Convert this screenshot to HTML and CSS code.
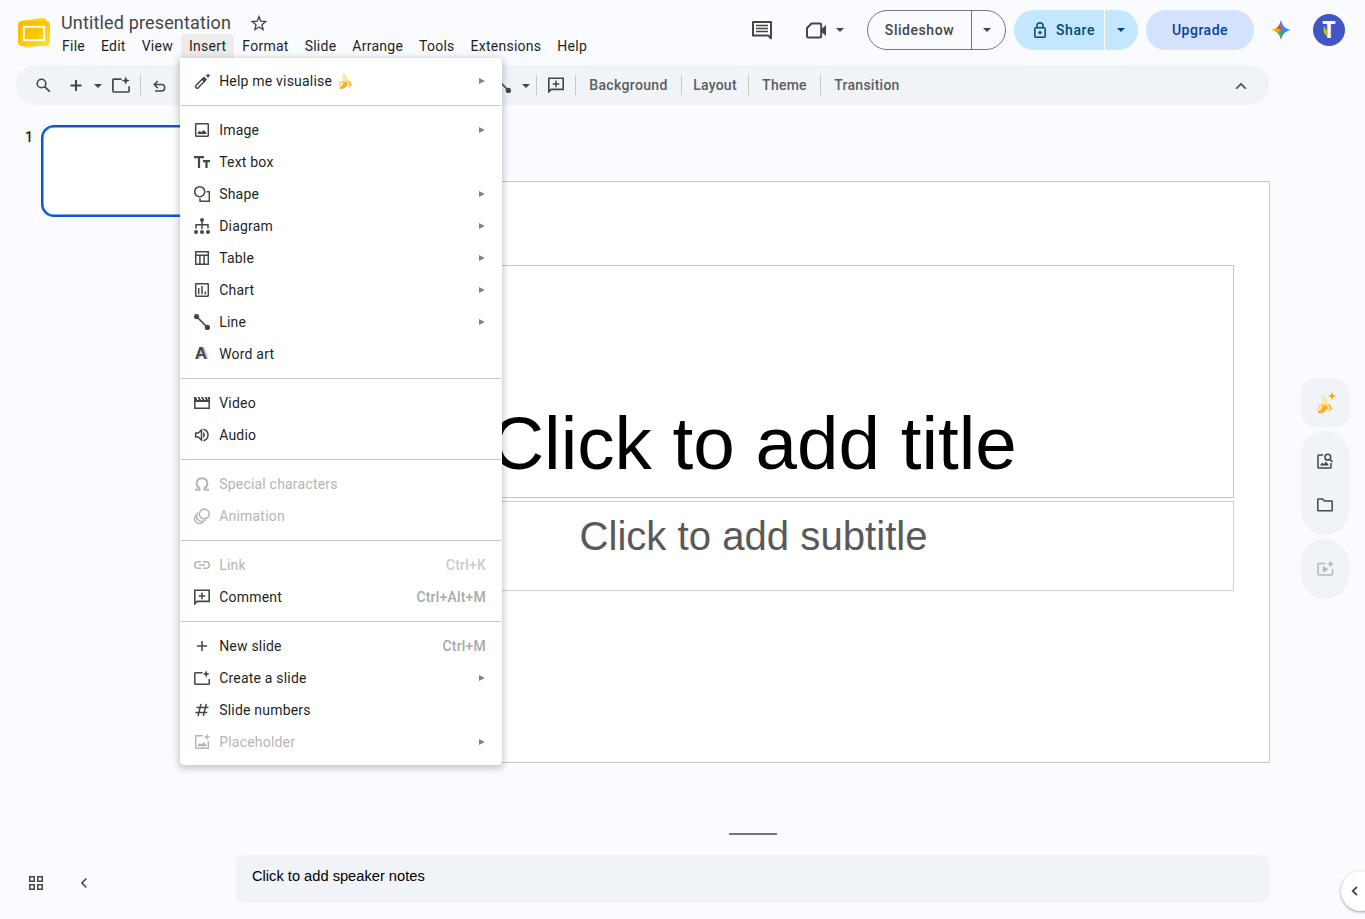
FILE: index.html
```
<!DOCTYPE html>
<html lang="en">
<head>
  <meta charset="UTF-8">
  <meta name="viewport" content="width=device-width, initial-scale=1.0">
  <title>Untitled presentation</title>
  <link rel="stylesheet" href="styles.css">
</head>
<body>

  <!-- Shared icons -->
  <svg class="sprite">
    <symbol id="i-newslide" viewBox="0 0 16 16"><path d="M8.5 2.800H1.600Q.8 2.800.8 3.600v9.800q0 .8.8.8h12.800q.8 0 .8-.8V9" fill="none" stroke="currentColor" stroke-width="1.5"/><path d="M12.200.3l1 2.700 2.700 1-2.700 1-1 2.700-1-2.700-2.700-1 2.700-1z" fill="currentColor"/></symbol>
    <symbol id="i-comment" viewBox="0 0 16 16"><path d="M.8 14.800V1.200h14.400v11.200H3.200z" fill="none" stroke="currentColor" stroke-width="1.600"/><path d="M8 3.600v6.600M4.700 6.900h6.600" stroke="currentColor" stroke-width="1.500"/></symbol>
    <symbol id="i-line" viewBox="0 0 16 16"><path d="M2.500 2.500l11 11" stroke="currentColor" stroke-width="1.700"/><circle cx="2.600" cy="2.600" r="2.600" fill="currentColor"/><circle cx="13.400" cy="13.400" r="2.600" fill="currentColor"/></symbol>
  </svg>

  <header class="header">
    <svg class="logo" viewBox="0 0 32 32">
      <defs><linearGradient id="lg" x1="0" y1="0" x2="1" y2="1"><stop offset="0" stop-color="#ffb900"/><stop offset=".55" stop-color="#ffc700"/><stop offset="1" stop-color="#ffe633"/></linearGradient></defs>
      <path d="M2 4l22-3q3-.3 4 2l1 5-22 4z" fill="#ffd500"/>
      <path d="M2 25l4 5q1 1 3 .8L28 28l1-3z" fill="#ffdb4d"/>
      <rect x="0" y="4" width="32" height="25" rx="4" fill="url(#lg)"/>
      <rect x="5.800" y="9.800" width="20.400" height="13.400" fill="none" stroke="#fff" stroke-width="1.900"/>
    </svg>
    <div class="doc">
      <div class="doc-title">
        <span>Untitled presentation</span>
        <svg width="16" height="16" viewBox="0 0 16 16"><path d="M8 1.700l1.800 4.500 4.900.4-3.700 3.200 1.100 4.700L8 12l-4.100 2.500L5 9.800 1.300 6.600l4.900-.4z" fill="none" stroke="currentColor" stroke-width="1.400"/></svg>
      </div>
      <nav class="menubar">
        <a>File</a><a>Edit</a><a>View</a><a class="active">Insert</a><a>Format</a><a>Slide</a><a>Arrange</a><a>Tools</a><a>Extensions</a><a>Help</a>
      </nav>
    </div>
    <div class="actions">
      <svg class="comments" width="20" height="21" viewBox="0 0 20 21"><path d="M1 1.900h18v16.300L16.200 15.500H1z" fill="none" stroke="currentColor" stroke-width="2" stroke-linejoin="round"/><path d="M4 5.500h12M4 8.500h12M4 11.500h12" stroke="currentColor" stroke-width="1.600"/></svg>
      <svg class="camera" width="20" height="17" viewBox="0 0 20 17"><path d="M5.500 1.500H14q1.200 0 1.200 1.200v11.600q0 1.200-1.200 1.200H2.200Q1 15.500 1 14.300V6z" fill="none" stroke="currentColor" stroke-width="2"/><path d="M15.500 7L20 3v11l-4.500-4z" fill="currentColor"/></svg>
      <i class="caret"></i>
      <div class="split slideshow"><span>Slideshow</span><b><i class="caret"></i></b></div>
      <div class="split share">
        <span><svg width="12" height="16" viewBox="0 0 12 16"><rect x=".8" y="5.800" width="10.400" height="9.400" rx="1" fill="none" stroke="currentColor" stroke-width="1.500"/><path d="M3 5.500V3.800a3 3 0 0 1 6 0v1.700" fill="none" stroke="currentColor" stroke-width="1.500"/><circle cx="6" cy="10.500" r="1.600" fill="currentColor"/></svg>Share</span><b><i class="caret"></i></b>
      </div>
      <div class="upgrade">Upgrade</div>
      <div class="gemini"></div>
      <div class="avatar">T<svg width="6" height="12" viewBox="0 0 6 12"><path d="M1.500 1v5l2 3M4 4v5M1 3l3 3" fill="none" stroke="#c6d300" stroke-width="1.600"/></svg></div>
    </div>
  </header>

  <div class="toolbar">
    <svg class="t-search" width="15" height="15" viewBox="0 0 15 15"><circle cx="5.500" cy="5.500" r="4.300" fill="none" stroke="currentColor" stroke-width="1.600"/><path d="M8.700 8.700l5 5" stroke="currentColor" stroke-width="1.800"/></svg>
    <svg class="t-plus" width="11" height="11" viewBox="0 0 11 11"><path d="M6 0v11M.5 5.500h11" stroke="currentColor" stroke-width="2"/></svg>
    <i class="caret t-caret"></i>
    <svg class="t-new" width="18" height="18"><use href="#i-newslide"/></svg>
    <hr>
    <svg class="t-undo" width="13" height="12" viewBox="0 0 13 12"><path d="M2 11h6.500a3.200 3.200 0 0 0 0-6.400H1.500M4.800 1L1.300 4.600l3.500 3.500" fill="none" stroke="currentColor" stroke-width="1.500"/></svg>
    <svg class="t-line" width="16" height="16"><use href="#i-line"/></svg>
    <i class="caret t-caret2"></i>
    <hr>
    <svg class="t-comment" width="16" height="16"><use href="#i-comment"/></svg>
    <hr>
    <span class="w-bg">Background</span><hr>
    <span class="w-layout">Layout</span><hr>
    <span class="w-theme">Theme</span><hr>
    <span class="w-trans">Transition</span>
    <svg class="t-up" width="12" height="8" viewBox="0 0 12 8"><path d="M1.200 6.800L6 2l4.800 4.800" fill="none" stroke="currentColor" stroke-width="1.600"/></svg>
  </div>

  <main class="workspace">
    <aside class="filmstrip">
      <div class="film"><span>1</span><div class="thumb"></div></div>
      <div class="film-tools">
        <svg width="14" height="14" viewBox="0 0 14 14"><path d="M.75.75h4.500v4.500H.75zM8.750.75h4.500v4.500h-4.500zM.75 8.750h4.500v4.500H.75zM8.750 8.750h4.500v4.500h-4.500z" fill="none" stroke="currentColor" stroke-width="1.500"/></svg>
        <svg width="7" height="10" viewBox="0 0 7 10"><path d="M5.300.5L1 5l4.300 4.500" fill="none" stroke="currentColor" stroke-width="1.600"/></svg>
      </div>
    </aside>

    <section class="stage">
      <div class="slide">
        <div class="slide-title">Click to add title</div>
        <div class="slide-sub">Click to add subtitle</div>
      </div>
      <div class="handle"></div>
      <div class="notes">Click to add speaker notes</div>
    </section>

    <aside class="rail">
      <div class="pill first">
        <em>🍌</em>
        <svg width="8" height="8" viewBox="0 0 8 8"><path d="M4 0l1.200 2.800L8 4 5.200 5.200 4 8 2.800 5.200 0 4l2.800-1.200z" fill="#f9ab00"/></svg>
      </div>
      <div class="pill second">
        <svg width="16" height="16" viewBox="0 0 16 16"><path d="M6 2H1.700q-.7 0-.7.700v11.500q0 .8.700.8h11.500q.8 0 .8-.8V10" fill="none" stroke="currentColor" stroke-width="1.500"/><path d="M3 12.500l2.200-3 1.600 1.800 2.200-2.800 3 4z" fill="currentColor"/><circle cx="10.800" cy="4.200" r="2.900" fill="none" stroke="currentColor" stroke-width="1.500"/><path d="M12.800 6.200l2.800 2.700" stroke="currentColor" stroke-width="1.500"/></svg>
        <svg width="16" height="14" viewBox="0 0 16 14"><path d="M.8 1.500Q.8 1 1.300 1h4.200l2 2h7.200q.5 0 .5.500v8.700q0 .6-.5.600H1.300q-.5 0-.5-.6z" fill="none" stroke="currentColor" stroke-width="1.500"/></svg>
      </div>
      <div class="pill third">
        <svg width="17" height="17" viewBox="0 0 17 17"><path d="M8.500 3.500H2q-1 0-1 1V14q0 1 1 1h12.500q1 0 1-1V9" fill="none" stroke="currentColor" stroke-width="1.500"/><path d="M6 6l5.500 3.300L6 12.500zM13.500.5l1 2.500 2.500 1-2.500 1-1 2.500-1-2.500-2.500-1 2.500-1z" fill="currentColor"/></svg>
      </div>
      <div class="expand"><svg width="7" height="10" viewBox="0 0 7 10"><path d="M6 .8L1.700 5 6 9.200" fill="none" stroke="currentColor" stroke-width="1.800"/></svg></div>
    </aside>
  </main>

  <!-- Insert menu -->
  <div class="dropdown">
    <div class="item"><svg viewBox="0 0 16 16"><path d="M2 12.600l6.800-7 2.200 2.200-6.800 7q-1.200 1-2.200 0t0-2.200z" fill="none" stroke="currentColor" stroke-width="1.500" stroke-linejoin="round"/><path d="M7.300 6.300L10.200 3.600l2.800 2.900-2.800 2.800zM14-.3l.8 2.200 2.200.8-2.200.8-.8 2.200-.8-2.200-2.200-.8 2.200-.8z" fill="currentColor"/></svg><span>Help me visualise <em>🍌</em></span><i class="sub"></i></div>
    <hr>
    <div class="item"><svg viewBox="0 0 16 16"><rect x="1.700" y="1.700" width="12.600" height="12.600" rx=".7" fill="none" stroke="currentColor" stroke-width="1.500"/><path d="M3.800 12V10.500l2-1.700 1.500 1.500L9.800 8l2.600 2.500V12z" fill="currentColor"/></svg><span>Image</span><i class="sub"></i></div>
    <div class="item"><svg viewBox="0 0 16 16"><path d="M0 3.200h10M5 3.200v10.800M9 7.200h7M12.500 7.200v6.800" stroke="currentColor" stroke-width="2.200"/></svg><span>Text box</span></div>
    <div class="item"><svg viewBox="0 0 16 16"><circle cx="5.700" cy="5.700" r="5" fill="none" stroke="currentColor" stroke-width="1.600"/><path d="M12.500 5.800h2.800v9.500H6v-3" fill="none" stroke="currentColor" stroke-width="1.500"/></svg><span>Shape</span><i class="sub"></i></div>
    <div class="item"><svg viewBox="0 0 16 16"><path d="M8 2v9M2 10.500V6.700h12v3.800" fill="none" stroke="currentColor" stroke-width="1.500"/><circle cx="8" cy="2" r="2" fill="currentColor"/><circle cx="2" cy="14" r="2" fill="currentColor"/><circle cx="8" cy="14" r="2" fill="currentColor"/><circle cx="14" cy="14" r="2" fill="currentColor"/></svg><span>Diagram</span><i class="sub"></i></div>
    <div class="item"><svg viewBox="0 0 16 16"><path d="M1.700 1.700h12.600v12.600H1.700zM1.700 5.300h12.600M5.900 5.300v9M10.100 5.300v9" fill="none" stroke="currentColor" stroke-width="1.500"/></svg><span>Table</span><i class="sub"></i></div>
    <div class="item"><svg viewBox="0 0 16 16"><rect x="1.700" y="1.700" width="12.600" height="12.600" rx=".7" fill="none" stroke="currentColor" stroke-width="1.500"/><path d="M4.700 6v6.200M8 4v8.200M11.300 9.500v2.700" stroke="currentColor" stroke-width="1.500"/></svg><span>Chart</span><i class="sub"></i></div>
    <div class="item"><svg><use href="#i-line"/></svg><span>Line</span><i class="sub"></i></div>
    <div class="item"><b class="wordart">A</b><span>Word art</span></div>
    <hr>
    <div class="item"><svg viewBox="0 0 16 16"><path d="M.8 6v7.200h14.400V6z" fill="none" stroke="currentColor" stroke-width="1.500"/><path d="M0 2h2l1.500 3H5L3.500 2h2L7 5h1.500L7 2h2l1.500 3H12l-1.500-3h2L14 5h.5L13.500 2H16v5H0z" fill="currentColor"/></svg><span>Video</span></div>
    <div class="item"><svg viewBox="0 0 16 16"><path d="M1.700 6h2.600L7.500 3v10L4.300 10H1.700z" fill="none" stroke="currentColor" stroke-width="1.500"/><path d="M9.200 4.800q3.600 3.200 0 6.400z" fill="currentColor"/><path d="M9.500 2.200c6 2 6 9.600 0 11.600" fill="none" stroke="currentColor" stroke-width="1.500"/></svg><span>Audio</span></div>
    <hr>
    <div class="item off"><svg viewBox="0 0 16 16"><path d="M1 13.700h4.500v-1.500c-4.500-3-3.500-9.900 2.500-9.900s7 6.900 2.500 9.900v1.500H15" fill="none" stroke="currentColor" stroke-width="2"/></svg><span>Special characters</span></div>
    <div class="item off"><svg viewBox="0 0 16 16"><circle cx="10.300" cy="5.900" r="4.900" fill="none" stroke="currentColor" stroke-width="1.500"/><path d="M4 4.600a4.900 4.900 0 0 0 7.500 7.200M1.900 7.200a4.900 4.900 0 0 0 7.300 6.700" fill="none" stroke="currentColor" stroke-width="1.500"/></svg><span>Animation</span></div>
    <hr>
    <div class="item off"><svg viewBox="0 0 16 16"><path d="M7 4.700H4a3.300 3.300 0 0 0 0 6.600h3M9 4.700h3a3.300 3.300 0 0 1 0 6.600H9M5 8h6" fill="none" stroke="currentColor" stroke-width="1.500"/></svg><span>Link</span><kbd>Ctrl+K</kbd></div>
    <div class="item"><svg><use href="#i-comment"/></svg><span>Comment</span><kbd>Ctrl+Alt+M</kbd></div>
    <hr>
    <div class="item"><svg viewBox="0 0 16 16"><path d="M8 3v10M3 8h10" stroke="currentColor" stroke-width="1.500"/></svg><span>New slide</span><kbd>Ctrl+M</kbd></div>
    <div class="item"><svg><use href="#i-newslide"/></svg><span>Create a slide</span><i class="sub"></i></div>
    <div class="item"><svg viewBox="0 0 16 16"><path d="M7 2L4 14M12.300 2l-3 12M2.500 5.500h12M1.300 10.500h12" stroke="currentColor" stroke-width="1.500"/></svg><span>Slide numbers</span></div>
    <div class="item off"><svg viewBox="0 0 16 16"><path d="M9 1.700H1.700v12.600h12.600V7" fill="none" stroke="currentColor" stroke-width="1.500"/><path d="M3.800 12.200V10.700l2-1.700 1.500 1.500 2.500-2.300 2.600 2.500v1.500z" fill="currentColor"/><path d="M13 .5v5M10.500 3h5" stroke="currentColor" stroke-width="1.400"/></svg><span>Placeholder</span><i class="sub"></i></div>
  </div>

</body>
</html>
```
FILE: styles.css
```
* {
  margin: 0;
  padding: 0;
  box-sizing: border-box;
}

body {
  position: relative;
  width: 1365px;
  height: 919px;
  overflow: hidden;
  background: #f9fbff;
  color: #444746;
  font-family: Roboto, sans-serif;
  font-size: 14px;
}

svg {
  display: block;
  flex: none;
  overflow: visible;
}

em {
  font-style: normal;
}

.sprite {
  position: absolute;
  width: 0;
  height: 0;
}

.caret {
  flex: none;
  border: 4px solid transparent;
  border-top-color: currentColor;
  border-bottom: 0;
}

/* Header */
.header {
  display: flex;
  height: 65px;
}

.logo {
  width: 32px;
  height: 32px;
  margin: 17px 4px 0 18px;
}

.doc-title {
  display: flex;
  align-items: center;
  gap: 20px;
  height: 22px;
  margin: 12px 0 0 7px;
  font-size: 18px;
  letter-spacing: 0.15px;
}

.doc-title span {
  margin-top: -2px;
}

.menubar {
  display: flex;
}

.menubar a {
  height: 24px;
  padding: 0 8px;
  border-radius: 4px 4px 0 0;
  color: #1f1f1f;
  line-height: 24px;
  letter-spacing: 0.25px;
}

.menubar .active {
  background: #ececed;
}

.actions {
  display: flex;
  align-items: center;
  height: 60px;
  margin-left: auto;
  padding-right: 20px;
  font-weight: 500;
}

.comments {
  margin-right: 34px;
}

.camera {
  margin-right: 10px;
}

.split {
  display: flex;
  height: 40px;
  border-radius: 20px;
  line-height: 40px;
}

.split span {
  display: flex;
  align-items: center;
  justify-content: center;
}

.split b {
  display: flex;
  align-items: center;
  justify-content: center;
}

.slideshow {
  width: 139px;
  margin-left: 23px;
  border: 1px solid #747775;
  line-height: 38px;
  letter-spacing: 0.55px;
}

.slideshow span {
  width: 103px;
}

.slideshow b {
  flex: 1;
  padding-right: 3px;
  border-left: 1px solid #747775;
}

.share {
  width: 124px;
  margin-left: 8px;
  background: #c2e7ff;
  color: #004a77;
}

.share span {
  gap: 10px;
  width: 90px;
  padding-left: 11px;
  letter-spacing: 0.6px;
}

.share b {
  flex: 1;
  padding-right: 2px;
  border-left: 1px solid #fff;
}

.upgrade {
  width: 108px;
  height: 40px;
  margin-left: 8px;
  border-radius: 20px;
  background: #d3e3fd;
  color: #0842a0;
  line-height: 40px;
  letter-spacing: 0.5px;
  text-align: center;
}

.gemini {
  width: 20px;
  height: 20px;
  margin: 0 22px 0 17px;
  background: conic-gradient(#4285f4 0 38%, #34a853 50%, #8ab13c 64%, #fbbc04 75%, #ea4335 88%, #ea4335 96%, #4285f4);
  clip-path: path('M10 0 C11.500 6 14 8.500 20 10 C14 11.500 11.500 14 10 20 C8.500 14 6 11.500 0 10 C6 8.500 8.500 6 10 0Z');
}

.avatar {
  position: relative;
  width: 32px;
  height: 32px;
  border-radius: 50%;
  background: #4355c4;
  color: #fff;
  font: bold 23px/31px "Open Sans", sans-serif;
  text-align: center;
}

.avatar svg {
  position: absolute;
  left: 10px;
  top: 12px;
}

/* Toolbar */
.toolbar {
  display: flex;
  align-items: center;
  width: 1253px;
  height: 40px;
  margin-left: 16px;
  border-radius: 20px;
  background: #f0f3f8;
}

.toolbar hr {
  width: 1px;
  height: 20px;
  border: 0;
  background: #c7c7c7;
}

.toolbar span {
  color: #5b5e61;
  font-weight: 500;
  text-align: center;
  letter-spacing: 0.25px;
}

.t-search { margin-left: 20px; }
.t-plus { margin-left: 19px; }
.t-caret { margin: 2px 10px 0 13px; }
.t-new { margin-right: 10px; }
.t-undo { margin: 2px 0 0 12px; }
.t-line { margin-left: 329px; }
.t-caret2 { margin: 1px 6px 0 11px; }
.t-comment { margin: 0 11px; }
.w-bg { width: 105px; }
.w-layout { width: 66px; }
.w-theme { width: 71px; }
.w-trans { width: 92px; }

.toolbar .w-bg {
  letter-spacing: 0.35px;
}

.t-up {
  margin: 1px 22px 0 auto;
}

/* Workspace */
.workspace {
  display: grid;
  grid-template-columns: 236px 1034px 95px;
  height: 814px;
}

.filmstrip {
  display: flex;
  flex-direction: column;
  justify-content: space-between;
}

.film {
  display: flex;
  padding: 20px 0 0 25px;
}

.film span {
  width: 16px;
  padding-top: 4px;
  color: #1f1f1f;
  font-weight: 500;
}

.thumb {
  width: 164px;
  height: 92px;
  border: 2.500px solid #0b57d0;
  border-radius: 13px;
  background: #fff;
  box-shadow: inset 0 0 0 0.500px #0b57d0;
}

.film-tools {
  display: flex;
  align-items: center;
  gap: 38px;
  padding: 0 0 29px 29px;
}

.stage {
  padding-top: 76px;
}

.slide {
  height: 582px;
  padding: 83px 35px 0;
  border: 1px solid #c4c7c5;
  background: #fff;
  font-family: "Liberation Sans", Arial, sans-serif;
  text-align: center;
}

.slide-title {
  height: 233px;
  padding: 134px 0 0 1px;
  border: 1px solid #c4c4c4;
  color: #000;
  font-size: 74.600px;
  line-height: 86px;
}

.slide-sub {
  height: 90px;
  margin-top: 3px;
  padding: 12px 0 0 1px;
  border: 1px solid #d0d0d0;
  color: #595959;
  font-size: 40.150px;
  line-height: 46px;
}

.handle {
  width: 48px;
  height: 2px;
  margin: 70px 0 20px 493px;
  background: #747775;
}

.notes {
  width: 1033px;
  height: 48px;
  padding: 12px 16px;
  border-radius: 8px;
  background: #f0f3f8;
  color: #000;
  font: 14.670px/18px "Liberation Sans", Arial, sans-serif;
}

.rail {
  display: flex;
  flex-direction: column;
  padding: 274px 0 8px 31px;
}

.pill {
  display: flex;
  flex-direction: column;
  align-items: center;
  justify-content: center;
  width: 48px;
  margin-bottom: 4px;
  padding-bottom: 2px;
  border-radius: 24px;
  background: #f0f3f8;
}

.first {
  position: relative;
  height: 48px;
  padding: 2px 3px 0 0;
  border-radius: 14px;
  font-size: 16px;
}

.first svg {
  position: absolute;
  left: 27px;
  top: 13px;
}

.second {
  gap: 29px;
  height: 104px;
}

.third {
  height: 60px;
  color: #b5b7b9;
}

.expand {
  width: 40px;
  height: 40px;
  margin: auto 0 0 40px;
  padding: 15px 10px;
  border-radius: 20px;
  background: #fff;
  box-shadow: 0 1px 3px rgba(60, 64, 67, 0.5);
}

/* Insert menu */
.dropdown {
  position: absolute;
  left: 180px;
  top: 58px;
  width: 322px;
  padding: 7px 0;
  border-radius: 0 4px 4px 4px;
  background: #fff;
  box-shadow: 0 2px 6px 2px rgba(60, 64, 67, 0.25);
}

.dropdown hr {
  height: 1px;
  margin: 8px 1px;
  border: 0;
  background: #c7c7c7;
}

.item {
  display: flex;
  align-items: center;
  height: 32px;
  padding: 0 16px 0 14px;
  letter-spacing: 0.2px;
}

.item svg {
  width: 16px;
  height: 16px;
}

.item span {
  margin-left: 9.200px;
  color: #1f1f1f;
}

.item kbd {
  margin-left: auto;
  color: #a8a9aa;
  font: 500 14px Roboto, sans-serif;
}

.sub {
  margin: 0 1px 0 auto;
  border: 3.500px solid transparent;
  border-left: 6px solid #80868b;
  border-right: 0;
}

.wordart {
  width: 16px;
  padding-right: 2px;
  font: bold 17px/16px "Liberation Sans", sans-serif;
  text-align: center;
  text-shadow: 1px 0 #ccc, 2px 0 #ccc;
}

.off,
.off span {
  color: #b4b5b5;
}

.off kbd {
  color: #cbcccc;
}
```
